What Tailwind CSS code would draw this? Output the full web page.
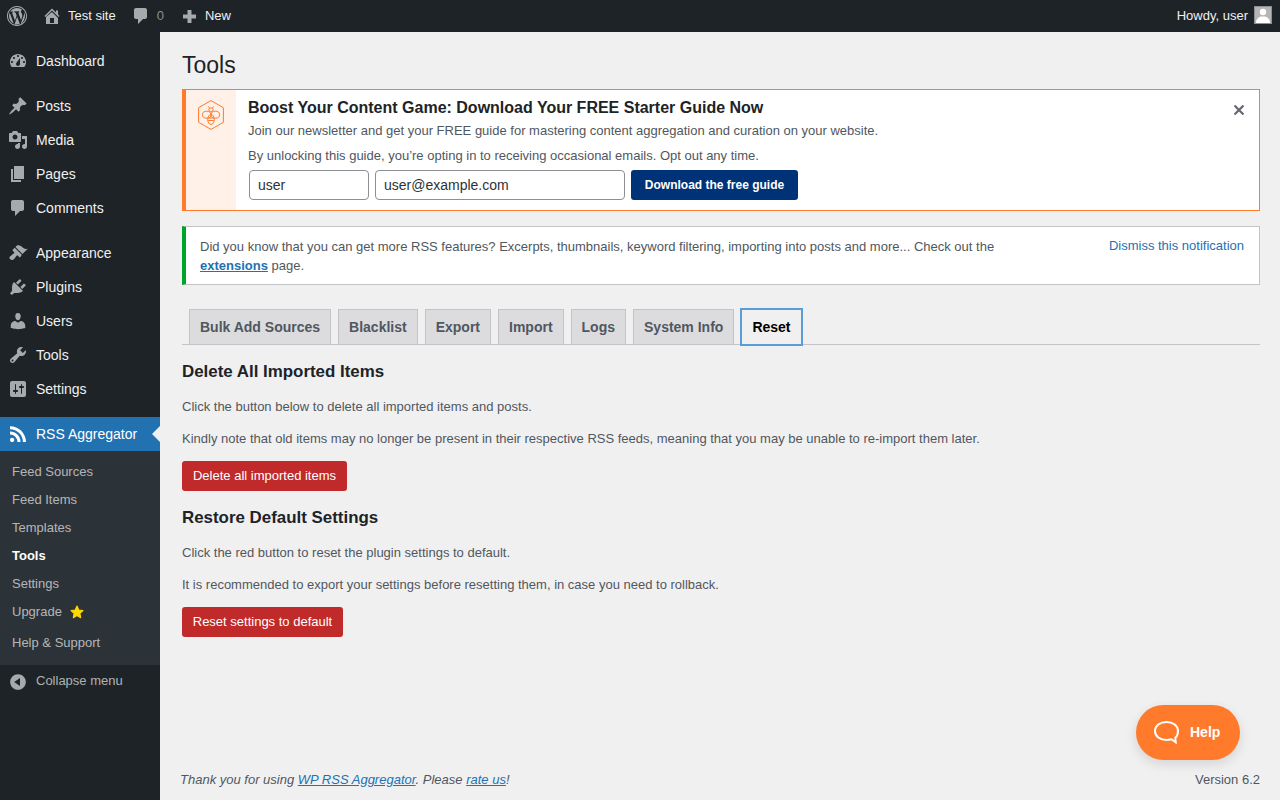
<!DOCTYPE html>
<html lang="en">
<head>
    <meta charset="UTF-8">
    <meta name="viewport" content="width=device-width, initial-scale=1.0">
    <title>Tools</title>
    <script src="https://cdn.jsdelivr.net/npm/@tailwindcss/browser@4"></script>
</head>
<body class="relative h-[800px] overflow-hidden bg-[#f0f0f1] font-['Liberation_Sans',sans-serif] text-[13px] text-[#50575e]">
    <!-- Admin bar -->
    <header class="flex h-8 items-center justify-between bg-[#1d2327] text-[13px] text-[#f0f0f1]">
        <div class="flex items-center">
            <svg class="ml-[7px] h-5 w-5 fill-[#a7aaad]" viewBox="0 0 20 20"><path d="M20 10c0-5.52-4.48-10-10-10S0 4.48 0 10s4.48 10 10 10 10-4.48 10-10zM10 1.01c4.96 0 8.99 4.03 8.99 8.99s-4.03 8.99-8.99 8.99S1.01 14.96 1.01 10 5.04 1.01 10 1.01zM8.01 14.82L4.96 6.61c.49-.03 1.05-.08 1.05-.08.43-.05.38-1.01-.06-.99 0 0-1.29.1-2.13.1-.15 0-.33 0-.52-.01 1.44-2.17 3.9-3.6 6.7-3.6 2.09 0 3.99.79 5.41 2.09-.6-.08-1.45.35-1.45 1.42 0 .66.38 1.22.79 1.88.31.54.5 1.22.5 2.21 0 1.34-1.27 4.48-1.27 4.48l-2.71-7.5c.48-.03.75-.16.75-.16.43-.05.38-1.1-.05-1.08 0 0-1.3.11-2.14.11-.78 0-2.11-.11-2.11-.11-.43-.02-.48 1.06-.05 1.08l.84.08 1.12 3.04zm6.02 2.15L16.64 10s.67-1.69.39-3.81c.63 1.14.94 2.42.94 3.81 0 2.96-1.56 5.58-3.94 7.97zM2.68 6.77L6.71 17.5C3.89 16.13 2.03 13.27 2.03 10c0-1.2.2-2.28.65-3.23zm7.45 4.04l2.71 7.17c-.9.31-1.85.49-2.84.49-.83 0-1.62-.12-2.37-.34z"/></svg>
            <svg class="ml-[15px] h-5 w-5 fill-[#a7aaad]" viewBox="0 0 20 20"><path d="M16 8.5l1.53 1.53-1.06 1.06L10 4.62l-6.47 6.47-1.06-1.06L10 2.5l4 4v-2h2v4zm-6-2.46l6 5.99V18H4v-6.97zM12 17v-5H8v5h4z"/></svg>
            <span class="ml-[6px]">Test site</span>
            <svg class="ml-[15px] h-5 w-5 fill-[#a7aaad]" viewBox="0 0 20 20"><path d="M5 2h9c1.1 0 2 .9 2 2v7c0 1.1-.9 2-2 2h-2l-5 5v-5H5c-1.1 0-2-.9-2-2V4c0-1.1.9-2 2-2z"/></svg>
            <span class="ml-[6px] text-[#8c8f94]">0</span>
            <svg class="ml-[15px] h-5 w-5 fill-[#a7aaad]" viewBox="0 0 20 20"><path d="M8.500 4h4v4.500H17v4h-4.500V17h-4v-4.500H4v-4h4.500z"/></svg>
            <span class="ml-[6px]">New</span>
        </div>
        <div class="flex items-center gap-[6px] pr-2">
            <span>Howdy, user</span>
            <span class="-mt-[2px] flex h-[18px] w-[18px] items-end justify-center overflow-hidden border border-[#8c8f94] bg-[#b5b5b5]">
                <svg class="h-4 w-4 fill-white" viewBox="0 0 16 16"><circle cx="8" cy="5" r="3.2"/><path d="M1 16c0-4 3-6 4.5-6.500h5C12 10 15 12 15 16z"/></svg>
            </span>
        </div>
    </header>

    <div class="flex h-[768px]">
        <!-- Sidebar -->
        <aside class="flex w-40 shrink-0 flex-col bg-[#1d2327] pt-3 text-[14px] text-[#f0f0f1]">
            <a class="flex h-[34px] items-center gap-2 pl-2">
                <svg class="h-5 w-5 fill-[#a7aaad]" viewBox="0 0 20 20"><path fill-rule="evenodd" d="M3.76 16h12.48c1.1-1.37 1.76-3.11 1.76-5 0-4.42-3.58-8-8-8s-8 3.58-8 8c0 1.89.66 3.63 1.76 5zM10 4c.55 0 1 .45 1 1s-.45 1-1 1-1-.45-1-1 .45-1 1-1zM6 6c.55 0 1 .45 1 1s-.45 1-1 1-1-.45-1-1 .45-1 1-1zm8 0c.55 0 1 .45 1 1s-.45 1-1 1-1-.45-1-1 .45-1 1-1zm-5.37 5.55L12 7v6c0 1.1-.9 2-2 2s-2-.9-2-2c0-.57.24-1.08.63-1.45zM4 10c.55 0 1 .45 1 1s-.45 1-1 1-1-.45-1-1 .45-1 1-1zm12 0c.55 0 1 .45 1 1s-.45 1-1 1-1-.45-1-1 .45-1 1-1z"/></svg>
                <span>Dashboard</span>
            </a>
            <a class="mt-[11px] flex h-[34px] items-center gap-2 pl-2">
                <svg class="h-5 w-5 fill-[#a7aaad]" viewBox="0 0 20 20"><path d="M10.44 3.02l1.82-1.82 6.36 6.35-1.83 1.82c-1.05-.68-2.48-.57-3.41.36l-.75.75c-.92.93-1.04 2.35-.35 3.41l-1.83 1.82-2.41-2.41-2.8 2.79c-.42.42-3.38 2.71-3.8 2.29s1.86-3.39 2.28-3.81l2.79-2.79L4.1 9.36l1.83-1.82c1.05.69 2.48.57 3.4-.36l.75-.75c.93-.92 1.05-2.35.36-3.41z"/></svg>
                <span>Posts</span>
            </a>
            <a class="flex h-[34px] items-center gap-2 pl-2">
                <svg class="h-5 w-5 fill-[#a7aaad]" viewBox="0 0 20 20"><path d="M13 11V4c0-.55-.45-1-1-1h-1.67L9 1H5L3.67 3H2c-.55 0-1 .45-1 1v7c0 .55.45 1 1 1h10c.55 0 1-.45 1-1zM7 4.5c1.38 0 2.5 1.12 2.5 2.5S8.38 9.5 7 9.5 4.5 8.38 4.5 7 5.62 4.5 7 4.5zM14 6h5v10.5c0 1.38-1.12 2.5-2.5 2.5S14 17.88 14 16.5s1.12-2.5 2.5-2.5c.17 0 .34.02.5.05V9h-3V6zm-4 8.05V13h2v3.5c0 1.38-1.12 2.5-2.5 2.5S7 17.88 7 16.5 8.12 14 9.5 14c.17 0 .34.02.5.05z"/></svg>
                <span>Media</span>
            </a>
            <a class="flex h-[34px] items-center gap-2 pl-2">
                <svg class="h-5 w-5 fill-[#a7aaad]" viewBox="0 0 20 20"><path d="M6 15V2h10v13H6zm-1 1h8v2H3V5h2v11z"/></svg>
                <span>Pages</span>
            </a>
            <a class="flex h-[34px] items-center gap-2 pl-2">
                <svg class="h-5 w-5 fill-[#a7aaad]" viewBox="0 0 20 20"><path d="M5 2h9c1.1 0 2 .9 2 2v7c0 1.1-.9 2-2 2h-2l-5 5v-5H5c-1.1 0-2-.9-2-2V4c0-1.1.9-2 2-2z"/></svg>
                <span>Comments</span>
            </a>
            <a class="mt-[11px] flex h-[34px] items-center gap-2 pl-2">
                <svg class="h-5 w-5 fill-[#a7aaad]" viewBox="0 0 20 20"><path d="M14.48 11.06L7.41 3.99l1.5-1.5c.5-.56 2.3-.47 3.51.32 1.21.8 1.43 1.28 2.91 2.1 1.18.64 2.45 1.26 4.45.85zm-.71.71L6.7 4.7 4.93 6.47c-.39.39-.39 1.02 0 1.41l1.06 1.06c.39.39.39 1.03 0 1.42-.6.6-1.43 1.11-2.21 1.69-.35.26-.7.53-1.01.84C1.43 13.23.91 15.01 2 16.1s2.77 1.33 4.11-.03c.31-.31.58-.66.85-1.02.57-.78 1.08-1.61 1.69-2.21.39-.39 1.02-.39 1.41 0l1.06 1.06c.39.39 1.02.39 1.41 0z"/></svg>
                <span>Appearance</span>
            </a>
            <a class="flex h-[34px] items-center gap-2 pl-2">
                <svg class="h-5 w-5 fill-[#a7aaad]" viewBox="0 0 20 20"><path d="M13.11 4.36L9.87 7.6 8 5.73l3.24-3.24c.35-.34 1.05-.2 1.56.32.52.51.66 1.21.31 1.55zm-8 1.77l.91-1.12 9.01 9.01-1.19.84c-.71.71-2.63 1.16-3.82 1.16H6.14L4.9 17.26c-.59.59-1.54.59-2.12 0-.59-.58-.59-1.53 0-2.12l1.24-1.24v-3.88c0-1.13.4-3.19 1.09-3.89zm7.26 3.97l3.24-3.24c.34-.35 1.04-.21 1.55.31.52.51.66 1.21.31 1.55l-3.24 3.25z"/></svg>
                <span>Plugins</span>
            </a>
            <a class="flex h-[34px] items-center gap-2 pl-2">
                <svg class="h-5 w-5 fill-[#a7aaad]" viewBox="0 0 20 20"><path d="M10 9.25c-2.27 0-2.73-3.44-2.73-3.44C7 4.02 7.82 2 9.97 2c2.16 0 2.98 2.02 2.71 3.81 0 0-.41 3.44-2.68 3.44zm0 2.57L12.72 10c2.39 0 4.52 2.33 4.52 4.53v2.49s-3.65 1.13-7.24 1.13c-3.65 0-7.24-1.13-7.24-1.13v-2.49c0-2.25 1.94-4.48 4.47-4.48z"/></svg>
                <span>Users</span>
            </a>
            <a class="flex h-[34px] items-center gap-2 pl-2">
                <svg class="h-5 w-5 fill-[#a7aaad]" viewBox="0 0 20 20"><path fill-rule="evenodd" d="M16.68 9.77c-1.34 1.34-3.3 1.67-4.95.99l-5.41 6.52c-.99.99-2.59.99-3.58 0s-.99-2.59 0-3.57l6.52-5.42c-.68-1.65-.35-3.61.99-4.95 1.28-1.28 3.12-1.62 4.72-1.06l-2.89 2.89 2.82 2.82 2.86-2.87c.53 1.58.18 3.39-1.08 4.65zM3.81 16.21c.4.39 1.04.39 1.43 0 .4-.4.4-1.04 0-1.43-.39-.4-1.03-.4-1.43 0-.39.39-.39 1.03 0 1.43z"/></svg>
                <span>Tools</span>
            </a>
            <a class="flex h-[34px] items-center gap-2 pl-2">
                <svg class="h-5 w-5 fill-[#a7aaad]" viewBox="0 0 20 20"><path d="M18 16V4c0-1.1-.9-2-2-2H4c-1.1 0-2 .9-2 2v12c0 1.1.9 2 2 2h12c1.1 0 2-.9 2-2zM8 11h1c.55 0 1 .45 1 1s-.45 1-1 1H8v1.5c0 .28-.22.5-.5.5s-.5-.22-.5-.5V13H6c-.55 0-1-.45-1-1s.45-1 1-1h1V5.5c0-.28.22-.5.5-.5s.5.22.5.5V11zm5-2h-1c-.55 0-1-.45-1-1s.45-1 1-1h1V5.5c0-.28.22-.5.5-.5s.5.22.5.5V7h1c.55 0 1 .45 1 1s-.45 1-1 1h-1v5.5c0 .28-.22.5-.5.5s-.5-.22-.5-.5V9z"/></svg>
                <span>Settings</span>
            </a>
            <a class="relative mt-[11px] flex h-[34px] items-center gap-2 bg-[#2271b1] pl-2 text-white">
                <svg class="h-5 w-5 fill-white" viewBox="0 0 20 20"><path d="M14.92 18H18C18 9.32 10.82 2.25 2 2.25v3.02c7.12 0 12.92 5.71 12.92 12.73zm-5.44 0h3.08C12.56 12.27 7.82 7.6 2 7.6v3.02c2 0 3.87.77 5.29 2.16C8.7 14.17 9.48 16.03 9.48 18zm-5.35-.02c1.17 0 2.13-.93 2.13-2.09 0-1.15-.96-2.09-2.13-2.09-1.18 0-2.13.94-2.13 2.09 0 1.16.95 2.09 2.13 2.09z"/></svg>
                <span>RSS Aggregator</span>
                <span class="absolute top-[9px] right-0 border-y-8 border-r-8 border-y-transparent border-r-[#f0f0f1]"></span>
            </a>
            <!-- Submenu -->
            <ul class="flex h-[214px] flex-col bg-[#2c3338] pt-[7px] text-[13px] text-[#f0f0f1]/70">
                <li class="flex h-[28px] items-center pl-3">Feed Sources</li>
                <li class="flex h-[28px] items-center pl-3">Feed Items</li>
                <li class="flex h-[28px] items-center pl-3">Templates</li>
                <li class="flex h-[28px] items-center pl-3 font-bold text-white">Tools</li>
                <li class="flex h-[28px] items-center pl-3">Settings</li>
                <li class="flex h-[28px] items-center gap-2 pl-3">Upgrade
                    <svg class="h-[14px] w-[14px] fill-[#ffd800] stroke-[#ffd800]" stroke-width="1.5" stroke-linejoin="round" viewBox="0 0 20 20"><path d="M10 1.500l2.600 5.600 6 .8-4.400 4.200 1.100 6-5.300-3-5.300 3 1.100-6-4.400-4.200 6-.8z"/></svg>
                </li>
                <li class="mt-[3px] flex h-[28px] items-center pl-3">Help &amp; Support</li>
            </ul>
            <a class="mt-[2px] flex h-[30px] items-center gap-2 pl-2 text-[13px] text-[#f0f0f1]/70">
                <svg class="h-5 w-5 fill-[#a7aaad]" viewBox="0 0 20 20"><path d="M10 2.16c4.33 0 7.84 3.51 7.84 7.84s-3.51 7.84-7.84 7.84S2.16 14.33 2.16 10 5.71 2.16 10 2.16zm2 11.72V6.12L6.18 9.97z"/></svg>
                <span class="-mt-[2px]">Collapse menu</span>
            </a>
        </aside>

        <!-- Main -->
        <main class="flex min-w-0 flex-1 flex-col pr-5 pl-[22px]">
            <h1 class="mt-[19px] h-[38px] text-[23px] leading-[29px] font-normal text-[#1d2327]">Tools</h1>

            <!-- Newsletter notice -->
            <section class="flex h-[122px] border border-l-4 border-[#ff7a2b] bg-white">
                <div class="flex w-[50px] shrink-0 justify-center bg-[#fff0e8] pt-[10px]">
                    <svg class="h-[30px] w-[26px]" viewBox="0 0 26 30" fill="none" stroke="#ff7a2b" stroke-width="1">
                        <path d="M13 .6l12.400 7.100v14.600L13 29.400.6 22.300V7.700z"/>
                        <ellipse cx="8.700" cy="14.700" rx="4.300" ry="3.500"/>
                        <ellipse cx="17.300" cy="14.700" rx="4.300" ry="3.500"/>
                        <rect x="10.900" y="8" width="4.200" height="3.400" rx="1.300"/>
                        <ellipse cx="13" cy="19.500" rx="3.300" ry="5"/>
                        <path d="M10.200 18h5.600M10.200 20.500h5.600M11.500 8l-1-1.500M14.500 8l1-1.500"/>
                    </svg>
                </div>
                <div class="relative flex-1 pt-[8px] pl-3">
                    <h3 class="text-[16px] leading-[20px] font-bold text-[#1d2327]">Boost Your Content Game: Download Your FREE Starter Guide Now</h3>
                    <p class="mt-[3px] leading-[20px]">Join our newsletter and get your FREE guide for mastering content aggregation and curation on your website.</p>
                    <p class="mt-[5px] leading-[20px]">By unlocking this guide, you’re opting in to receiving occasional emails. Opt out any time.</p>
                    <form class="mt-[4px] flex gap-[6px] pl-px">
                        <input class="h-[30px] w-[120px] rounded-[4px] border border-[#8c8f94] bg-white px-2 text-[14px] text-[#2c3338]" value="user">
                        <input class="h-[30px] w-[250px] rounded-[4px] border border-[#8c8f94] bg-white px-2 text-[14px] text-[#2c3338]" value="user@example.com">
                        <button class="h-[30px] w-[167px] rounded-[3px] bg-[#003278] text-[12px] font-bold text-white">Download the free guide</button>
                    </form>
                    <svg class="absolute top-[15px] right-[15px] h-[10px] w-[10px] stroke-[#646970]" viewBox="0 0 10 10" stroke-width="2.2"><path d="M.5.5l9 9M9.500.5l-9 9"/></svg>
                </div>
            </section>

            <!-- Extensions notice -->
            <section class="mt-[15px] flex h-[59px] justify-between border border-l-4 border-[#c3c4c7] border-l-[#00a32a] bg-white pt-[9px] pr-[15px] pl-[14px]">
                <p class="mt-px w-[860px] leading-[19px]">Did you know that you can get more RSS features? Excerpts, thumbnails, keyword filtering, importing into posts and more... Check out the <a class="font-bold text-[#2271b1] underline">extensions</a> page.</p>
                <a class="leading-[19px] text-[#2271b1]">Dismiss this notification</a>
            </section>

            <!-- Tabs -->
            <nav class="mt-[24px] flex h-[36px] gap-[7px] border-b border-[#c3c4c7] pl-[7px] text-[14px] font-bold text-[#50575e]">
                <a class="h-[36px] border border-[#c3c4c7] bg-[#dcdcde] px-[10px] leading-[34px]">Bulk Add Sources</a>
                <a class="h-[36px] border border-[#c3c4c7] bg-[#dcdcde] px-[10px] leading-[34px]">Blacklist</a>
                <a class="h-[36px] border border-[#c3c4c7] bg-[#dcdcde] px-[10px] leading-[34px]">Export</a>
                <a class="h-[36px] border border-[#c3c4c7] bg-[#dcdcde] px-[10px] leading-[34px]">Import</a>
                <a class="h-[36px] border border-[#c3c4c7] bg-[#dcdcde] px-[10px] leading-[34px]">Logs</a>
                <a class="h-[36px] border border-[#c3c4c7] bg-[#dcdcde] px-[10px] leading-[34px]">System Info</a>
                <a class="h-[36px] border border-[#5b9dd9] bg-[#f0f0f1] px-[10px] leading-[34px] text-black shadow-[0_0_0_1px_#5b9dd9]">Reset</a>
            </nav>

            <h2 class="mt-[17px] text-[16.9px] leading-[20px] font-bold text-[#1d2327]">Delete All Imported Items</h2>
            <p class="mt-[15px] leading-[20px]">Click the button below to delete all imported items and posts.</p>
            <p class="mt-[12px] leading-[20px]">Kindly note that old items may no longer be present in their respective RSS feeds, meaning that you may be unable to re-import them later.</p>
            <button class="mt-[12px] h-[30px] w-[165px] rounded-[3px] bg-[#c02a2a] text-white">Delete all imported items</button>

            <h2 class="mt-[17px] text-[16.9px] leading-[20px] font-bold text-[#1d2327]">Restore Default Settings</h2>
            <p class="mt-[15px] leading-[20px]">Click the red button to reset the plugin settings to default.</p>
            <p class="mt-[12px] leading-[20px]">It is recommended to export your settings before resetting them, in case you need to rollback.</p>
            <button class="mt-[12px] h-[30px] w-[161px] rounded-[3px] bg-[#c02a2a] text-white">Reset settings to default</button>

            <!-- Footer -->
            <footer class="mt-auto mb-[11px] -ml-[2px] flex justify-between leading-[18px] text-[#50575e]">
                <p class="italic">Thank you for using <a class="text-[#2271b1] underline">WP RSS Aggregator</a>. Please <a class="text-[#2271b1] underline">rate us</a>!</p>
                <span>Version 6.2</span>
            </footer>
        </main>
    </div>

    <!-- Help button -->
    <button class="absolute top-[705px] left-[1136px] flex h-[55px] w-[104px] items-center gap-[11px] rounded-[28px] bg-[#ff7a2b] pl-[18px] text-[14px] font-bold text-white shadow-[0_4px_12px_rgba(0,0,0,0.12)]">
        <svg class="h-[23px] w-[25px] shrink-0" viewBox="0 0 25 23" fill="none" stroke="white" stroke-width="2"><path d="M12.500 1C6 1 1 4.800 1 10C1 15.200 6 19 12.500 19c1.800 0 3.400-.2 5-.7l4.200 3-.4-4.300C23 15.400 24 13 24 10 24 4.800 19 1 12.500 1z"/></svg>
        Help
    </button>
</body>
</html>
